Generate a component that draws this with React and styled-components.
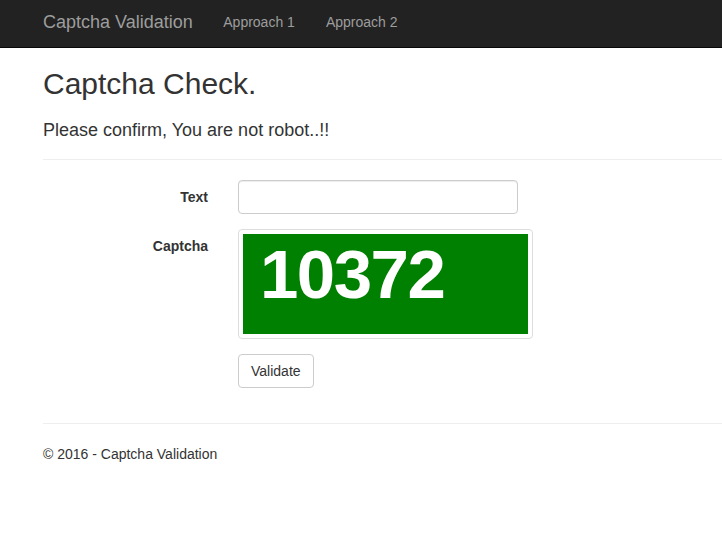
import React from "react";
import styled, { createGlobalStyle } from "styled-components";

const Global = createGlobalStyle`
  html, body { margin: 0; padding: 0; background: #fff; }
  body {
    font-family: "Liberation Sans", Arial, Helvetica, sans-serif;
    font-size: 14px;
    line-height: 20px;
    color: #333;
    overflow: hidden;
  }
  * { box-sizing: border-box; }
`;

const Navbar = styled.nav`
  display: flex;
  align-items: center;
  height: 48px;
  background: #222;
  border-bottom: 1px solid #080808;
  padding: 0 0 4px 28px;
`;

const Brand = styled.a`
  padding: 0 15px;
  font-size: 18px;
  line-height: 20px;
  color: #9d9d9d;
  text-decoration: none;
`;

const NavLink = styled.a`
  padding: 0 15.5px;
  font-size: 14px;
  line-height: 20px;
  color: #9d9d9d;
  text-decoration: none;
`;

const Main = styled.main`
  padding-left: 43px;
`;

const Title = styled.h2`
  margin: 19px 0 0;
  font-size: 30px;
  font-weight: 500;
  line-height: 33px;
`;

const Subtitle = styled.h4`
  margin: 20px 0 0;
  font-size: 18px;
  font-weight: 500;
  line-height: 20px;
`;

const Divider = styled.hr`
  margin: ${(p) => p.$top}px 0 20px;
  border: 0;
  border-top: 1px solid #eee;
  height: 0;
`;

const FormRow = styled.div`
  display: grid;
  grid-template-columns: 165px 1fr;
  column-gap: 30px;
  margin-bottom: 15px;
`;

const Label = styled.label`
  text-align: right;
  font-weight: 700;
  padding-top: 7px;
  line-height: 20px;
`;

const Input = styled.input`
  width: 280px;
  height: 34px;
  padding: 6px 12px;
  border: 1px solid #ccc;
  border-radius: 4px;
  box-shadow: inset 0 1px 1px rgba(0, 0, 0, 0.075);
  font: inherit;
  color: #555;
`;

const Thumbnail = styled.div`
  width: fit-content;
  padding: 4px;
  border: 1px solid #ddd;
  border-radius: 4px;
  background: #fff;
`;

const CaptchaImage = styled.div`
  width: 285px;
  height: 100px;
  background: #008000;
  color: #fff;
  font-weight: 700;
  font-size: 69px;
  line-height: 69px;
  letter-spacing: -1.5px;
  padding: 6px 0 0 17px;
`;

const Button = styled.button`
  grid-column: 2;
  justify-self: start;
  height: 34px;
  padding: 6px 12px;
  border: 1px solid #ccc;
  border-radius: 4px;
  background: #fff;
  color: #333;
  font: inherit;
  line-height: 20px;
`;

const Footer = styled.footer`
  margin: 0;
`;

const FooterText = styled.p`
  margin: 0;
  line-height: 20px;
`;

export default function App() {
  return (
    <>
      <Global />
      <Navbar>
        <Brand href="#">Captcha Validation</Brand>
        <NavLink href="#">Approach 1</NavLink>
        <NavLink href="#">Approach 2</NavLink>
      </Navbar>
      <Main>
        <Title>Captcha Check.</Title>
        <Subtitle>Please confirm, You are not robot..!!</Subtitle>
        <Divider $top={19} />
        <form onSubmit={(e) => e.preventDefault()}>
          <FormRow>
            <Label htmlFor="txt">Text</Label>
            <div>
              <Input id="txt" type="text" />
            </div>
          </FormRow>
          <FormRow>
            <Label>Captcha</Label>
            <Thumbnail>
              <CaptchaImage>10372</CaptchaImage>
            </Thumbnail>
          </FormRow>
          <FormRow>
            <Button type="submit">Validate</Button>
          </FormRow>
        </form>
        <Divider $top={35} />
        <Footer>
          <FooterText>© 2016 - Captcha Validation</FooterText>
        </Footer>
      </Main>
    </>
  );
}
